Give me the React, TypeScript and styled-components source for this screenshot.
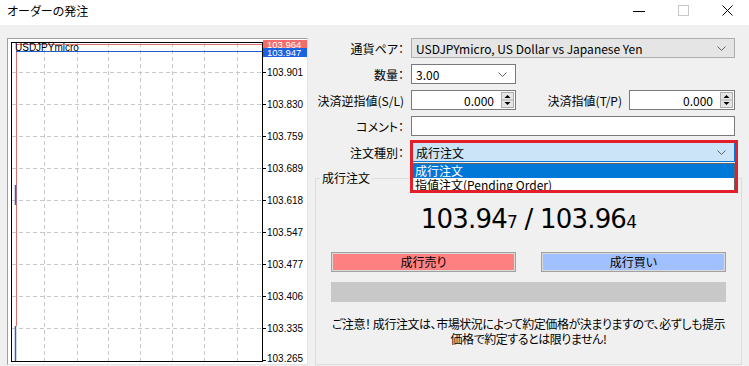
import React from "react";
import styled, { createGlobalStyle } from "styled-components";

const GlobalStyle = createGlobalStyle`
  html, body {
    margin: 0;
    padding: 0;
    background: #f0f0f0;
  }
  body {
    font-family: "Noto Sans CJK JP", "Noto Sans", sans-serif;
    font-size: 12px;
    color: #000;
    font-feature-settings: "palt";
  }
`;

const Window = styled.div`
  width: 749px;
  height: 366px;
  background: #f0f0f0;
  overflow: hidden;
`;

const TitleBar = styled.div`
  height: 25px;
  background: #fff;
  display: flex;
  align-items: stretch;
  justify-content: space-between;
  padding-left: 7px;
`;

const Title = styled.span`
  font-size: 12px;
  line-height: 22px;
`;

const Caption = styled.div`
  display: flex;
`;

const CaptionBtn = styled.div`
  width: 44px;
  display: flex;
  align-items: center;
  justify-content: center;
  padding-bottom: 4px;
`;

const Body = styled.div`
  display: flex;
  gap: 7px;
  padding: 13px 7px 0 7px;
`;

const ChartPanel = styled.div`
  width: 299px;
  height: 325px;
  background: #fff;
  border: 1px solid;
  border-color: #a0a0a0 #e3e3e3 #e3e3e3 #a0a0a0;
  overflow: hidden;
  flex: none;
`;

const FormCol = styled.div`
  width: 427px;
  display: flex;
  flex-direction: column;
`;

const FormGrid = styled.div`
  display: grid;
  grid-template-columns: 92px 105px 105px 106px;
  grid-auto-rows: 20px;
  column-gap: 4px;
  row-gap: 6px;
  width: 420px;
`;

const Label = styled.div`
  display: flex;
  align-items: center;
  justify-content: flex-end;
  padding-right: 3px;
  white-space: nowrap;
`;

const tones = {
  gray: { bg: "#e5e5e5", border: "#adadad" },
  white: { bg: "#fff", border: "#7a7a7a" },
  focus: { bg: "#cce4f7", border: "#0078d7" },
};

const Field = styled.div<{ $span?: number; $tone?: keyof typeof tones; $right?: boolean }>`
  grid-column: span ${(p) => p.$span ?? 1};
  position: relative;
  display: flex;
  align-items: center;
  gap: 4px;
  box-sizing: border-box;
  border: 1px solid ${(p) => tones[p.$tone ?? "white"].border};
  background: ${(p) => tones[p.$tone ?? "white"].bg};
  padding: 0 1px 0 4px;
  white-space: nowrap;
  justify-content: ${(p) => (p.$right ? "flex-end" : "flex-start")};
`;

const FieldText = styled.span`
  flex: 1;
`;

const NumText = styled.span`
  padding-right: 3px;
`;

const Chevron = styled.svg`
  flex: none;
  margin-right: 7px;
`;

const Highlight = styled.div`
  position: absolute;
  top: -3px;
  left: -2px;
  width: 328px;
  height: 53px;
  box-sizing: border-box;
  border: 3px solid #e3202a;
  pointer-events: none;
  z-index: 3;
`;

const DropList = styled.div`
  position: absolute;
  top: 20px;
  left: -1px;
  right: -1px;
  background: #fff;
  border: 1px solid #646464;
  z-index: 2;
`;

const DropItem = styled.div<{ $active?: boolean }>`
  height: 13px;
  line-height: 13px;
  padding-left: 3px;
  background: ${(p) => (p.$active ? "#0078d7" : "#fff")};
  color: ${(p) => (p.$active ? "#fff" : "#000")};
  &:first-child {
    height: 14px;
    line-height: 14px;
  }
`;

const Group = styled.fieldset`
  margin: 9px 0 0 0;
  padding: 0 15px;
  border: 1px solid #dcdcdc;
  height: 194px;
  box-sizing: border-box;
  min-width: 0;
`;

const Legend = styled.legend`
  margin-left: -11px;
  padding: 0 2px;
  line-height: 14px;
`;

const Price = styled.div`
  margin-top: 18px;
  text-align: center;
  font-family: "DejaVu Sans", Tahoma, sans-serif;
  font-size: 26px;
  line-height: 32px;
  letter-spacing: -0.8px;
`;

const Small = styled.span`
  font-size: 17px;
`;

const Buttons = styled.div`
  margin-top: 14px;
  display: grid;
  grid-template-columns: 1fr 1fr;
  column-gap: 25px;
`;

const TradeButton = styled.div<{ $side: "sell" | "buy" }>`
  height: 20px;
  box-sizing: border-box;
  border: 1px solid #a0a0a0;
  box-shadow: inset 0 0 0 1px #dadada;
  background: ${(p) => (p.$side === "sell" ? "#ff8080" : "#a0c0ff")};
  display: flex;
  align-items: center;
  justify-content: center;
  line-height: 18px;
`;

const Bar = styled.div`
  margin-top: 10px;
  height: 20px;
  background: #c8c8c8;
`;

const Note = styled.p`
  margin: 14px -8px 0 -8px;
  text-align: center;
  line-height: 15px;
  white-space: nowrap;
  letter-spacing: -0.45px;
`;

const Spin = () => (
  <svg width="13" height="16" viewBox="0 0 13 16" style={{ flex: "none" }}>
    <rect x="0.5" y="0.5" width="12" height="15" fill="#e5e5e5" stroke="#adadad" />
    <line x1="1" y1="8" x2="12" y2="8" stroke="#adadad" />
    <path d="M6.5 3 L9.5 6 L3.5 6 Z" fill="#000" />
    <path d="M6.5 13 L9.5 10 L3.5 10 Z" fill="#000" />
  </svg>
);

const Down = () => (
  <Chevron width="9" height="5" viewBox="0 0 9 5">
    <path d="M0.5 0.5 L4.5 4.5 L8.5 0.5" fill="none" stroke="#606060" strokeWidth="1" />
  </Chevron>
);

const gridX = [36, 69, 100, 132, 164, 196, 229];
const gridY = [33, 65, 97, 129, 161, 193, 225, 257, 289];
const axis = ["103.901", "103.830", "103.759", "103.689", "103.618", "103.547", "103.477", "103.406", "103.335"];

const Chart = () => (
  <svg width="299" height="325" viewBox="0 0 299 325" fontFamily="'Liberation Sans', Arial, sans-serif">
    {gridX.map((x) => (
      <line key={x} x1={x + 0.5} y1="4" x2={x + 0.5} y2="322" stroke="#c8c8c8" strokeDasharray="4 3" />
    ))}
    {gridY.map((y) => (
      <line key={y} x1="4" y1={y + 0.5} x2="258" y2={y + 0.5} stroke="#c8c8c8" strokeDasharray="4 3" />
    ))}
    {gridY.map((y) => (
      <line key={"t" + y} x1="254" y1={y + 0.5} x2="258" y2={y + 0.5} stroke="#000" />
    ))}
    <rect x="3.5" y="3.5" width="251" height="319" fill="none" stroke="#000" />
    <line x1="8.5" y1="5" x2="8.5" y2="287" stroke="#d87070" />
    <line x1="8" y1="5.5" x2="254" y2="5.5" stroke="#d87070" />
    <line x1="8" y1="12.5" x2="254" y2="12.5" stroke="#1e5fc8" />
    <line x1="7.5" y1="146" x2="7.5" y2="166" stroke="#3060c0" strokeWidth="1.5" />
    <line x1="7.5" y1="287" x2="7.5" y2="322" stroke="#3060c0" strokeWidth="1.5" />
    <text x="7" y="12" fontSize="10" fill="#000">USDJPYmicro</text>
    {axis.map((t, i) => (
      <text key={t} x="259" y={gridY[i] + 4} fontSize="10" fill="#000">{t}</text>
    ))}
    <line x1="254" y1="321.5" x2="258" y2="321.5" stroke="#000" />
    <text x="259" y="323" fontSize="10" fill="#000">103.265</text>
    <rect x="255" y="1" width="44" height="8" fill="#f46c6c" />
    <rect x="255" y="9" width="44" height="9" fill="#1a62e0" />
    <text x="259" y="8.5" fontSize="9.5" fill="#fff">103.964</text>
    <text x="259" y="17" fontSize="9.5" fill="#fff">103.947</text>
  </svg>
);

export default function App() {
  return (
    <Window>
      <GlobalStyle />
      <TitleBar>
        <Title>オーダーの発注</Title>
        <Caption>
          <CaptionBtn>
            <svg width="12" height="12" viewBox="0 0 12 12">
              <line x1="0" y1="6.5" x2="12" y2="6.5" stroke="#000" />
            </svg>
          </CaptionBtn>
          <CaptionBtn>
            <svg width="11" height="11" viewBox="0 0 11 11">
              <rect x="0.5" y="0.5" width="10" height="10" fill="none" stroke="#c8c8c8" />
            </svg>
          </CaptionBtn>
          <CaptionBtn>
            <svg width="11" height="11" viewBox="0 0 11 11">
              <path d="M0.5 0.5 L10.5 10.5 M10.5 0.5 L0.5 10.5" stroke="#000" strokeWidth="1" />
            </svg>
          </CaptionBtn>
        </Caption>
      </TitleBar>
      <Body>
        <ChartPanel>
          <Chart />
        </ChartPanel>
        <FormCol>
          <FormGrid>
            <Label>通貨ペア：</Label>
            <Field $span={3} $tone="gray">
              <FieldText>USDJPYmicro, US Dollar vs Japanese Yen</FieldText>
              <Down />
            </Field>

            <Label>数量：</Label>
            <Field>
              <FieldText>3.00</FieldText>
              <Down />
            </Field>
            <div />
            <div />

            <Label>決済逆指値(S/L)</Label>
            <Field $right>
              <NumText>0.000</NumText>
              <Spin />
            </Field>
            <Label>決済指値(T/P)</Label>
            <Field $right>
              <NumText>0.000</NumText>
              <Spin />
            </Field>

            <Label>コメント：</Label>
            <Field $span={3} />

            <Label>注文種別：</Label>
            <Field $span={3} $tone="focus">
              <FieldText>成行注文</FieldText>
              <Down />
              <DropList>
                <DropItem $active>成行注文</DropItem>
                <DropItem>指値注文(Pending Order)</DropItem>
              </DropList>
              <Highlight />
            </Field>
          </FormGrid>

          <Group>
            <Legend>成行注文</Legend>
            <Price>
              103.94<Small>7</Small> / 103.96<Small>4</Small>
            </Price>
            <Buttons>
              <TradeButton $side="sell">成行売り</TradeButton>
              <TradeButton $side="buy">成行買い</TradeButton>
            </Buttons>
            <Bar />
            <Note>
              ご注意！ 成行注文は、市場状況によって約定価格が決まりますので、必ずしも提示
              <br />
              価格で約定するとは限りません!
            </Note>
          </Group>
        </FormCol>
      </Body>
    </Window>
  );
}
